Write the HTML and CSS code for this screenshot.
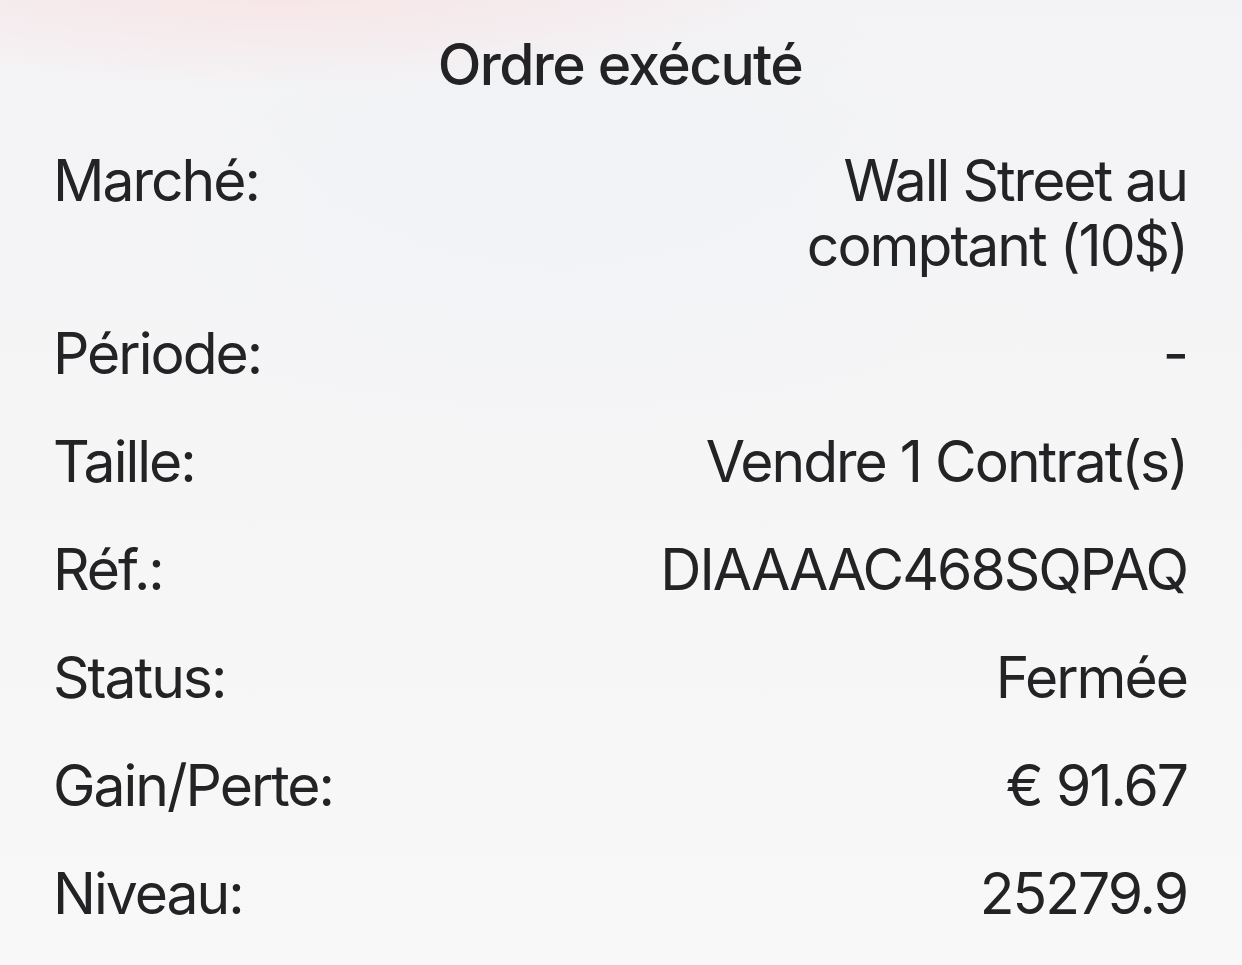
FILE: index.html
```html
<!DOCTYPE html>
<html lang="fr">
<head>
<meta charset="utf-8">
<link rel="stylesheet" href="styles.css">
</head>
<body>
<div class="sheet">
  <h1 class="title">Ordre exécuté</h1>
  <dl class="details">
    <div class="row"><dt>Marché:</dt><dd>Wall Street au<br>comptant (10$)</dd></div>
    <div class="row"><dt>Période:</dt><dd>-</dd></div>
    <div class="row"><dt>Taille:</dt><dd>Vendre 1 Contrat(s)</dd></div>
    <div class="row"><dt>Réf.:</dt><dd>DIAAAAC468SQPAQ</dd></div>
    <div class="row"><dt>Status:</dt><dd>Fermée</dd></div>
    <div class="row"><dt>Gain/Perte:</dt><dd>€ 91.67</dd></div>
    <div class="row"><dt>Niveau:</dt><dd>25279.9</dd></div>
  </dl>
</div>
</body>
</html>
```
FILE: styles.css
```css
html, body {
  margin: 0;
  padding: 0;
}
body {
  width: 1242px;
  height: 965px;
  overflow: hidden;
  font-family: Inter, "Open Sans", "Liberation Sans", sans-serif;
  color: #232326;
  background:
    radial-gradient(ellipse 560px 120px at 280px -30px, rgba(250, 222, 224, 0.8), rgba(250, 222, 224, 0) 100%),
    radial-gradient(ellipse 480px 240px at 560px 200px, rgba(236, 240, 246, 0.45), rgba(236, 240, 246, 0) 100%),
    linear-gradient(#f3f3f5, #f6f6f7 60%, #f8f8f8);
}
.sheet {
  padding: 32px 55px 0 53px;
}
.title {
  margin: 0;
  text-align: center;
  font-size: 57px;
  line-height: 65px;
  font-weight: 500;
  letter-spacing: -1.6px;
}
.details {
  margin: 51px 0 0 0;
  display: flex;
  flex-direction: column;
  gap: 43px;
}
.row {
  display: flex;
  justify-content: space-between;
  align-items: flex-start;
  font-size: 57px;
  line-height: 65px;
  letter-spacing: -2px;
}
.row dt {
  margin: 0;
}
.row dd {
  margin: 0;
  text-align: right;
}
```
